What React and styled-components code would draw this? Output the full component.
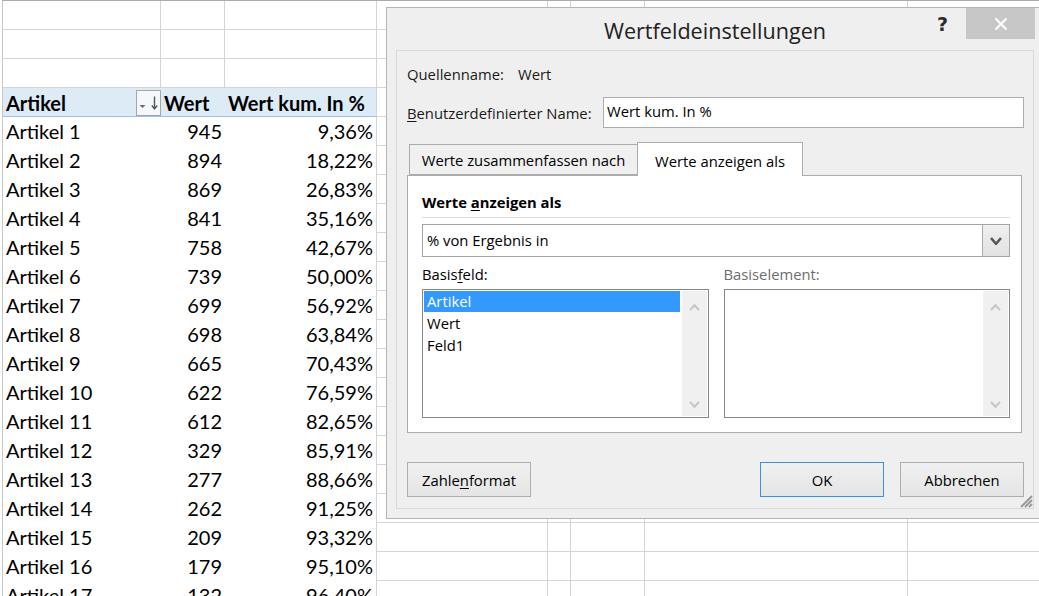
import React from "react";
import styled, { createGlobalStyle } from "styled-components";

const GlobalStyle = createGlobalStyle`
  html, body {
    margin: 0;
    padding: 0;
    background: #fff;
    overflow: hidden;
  }
  #root {
    position: relative;
    width: 1039px;
    height: 596px;
    overflow: hidden;
  }
`;

const rows = [
  ["Artikel 1", 945, "9,36%"],
  ["Artikel 2", 894, "18,22%"],
  ["Artikel 3", 869, "26,83%"],
  ["Artikel 4", 841, "35,16%"],
  ["Artikel 5", 758, "42,67%"],
  ["Artikel 6", 739, "50,00%"],
  ["Artikel 7", 699, "56,92%"],
  ["Artikel 8", 698, "63,84%"],
  ["Artikel 9", 665, "70,43%"],
  ["Artikel 10", 622, "76,59%"],
  ["Artikel 11", 612, "82,65%"],
  ["Artikel 12", 329, "85,91%"],
  ["Artikel 13", 277, "88,66%"],
  ["Artikel 14", 262, "91,25%"],
  ["Artikel 15", 209, "93,32%"],
  ["Artikel 16", 179, "95,10%"],
  ["Artikel 17", 132, "96,40%"],
];

const EXTRA_COLS = 5;

/* ---------- spreadsheet ---------- */

const Sheet = styled.div`
  margin-left: 2px;
  border-top: 1px solid #ababab;
  border-left: 1px solid #c8c8c8;
  font-family: Lato, "Open Sans", sans-serif;
  font-size: 20px;
  color: #000;
`;

const Row = styled.div`
  display: grid;
  grid-template-columns: 158px 64px 152px 171px 23px 74px 263px 200px;
  height: 29px;
`;

const Cell = styled.div`
  box-sizing: border-box;
  height: 29px;
  border-right: 1px solid #d4d4d4;
  border-bottom: 1px solid #d4d4d4;
`;

const PivotCell = styled.div`
  box-sizing: border-box;
  height: 29px;
  display: flex;
  align-items: flex-end;
  justify-content: ${(p) => (p.$right ? "flex-end" : "flex-start")};
  padding: 0 3px ${(p) => (p.$head ? 1 : 3)}px;
  line-height: 24px;
  white-space: nowrap;
  position: relative;
  font-weight: ${(p) => (p.$head ? 700 : 400)};
  background: ${(p) => (p.$head ? "#ddebf7" : "#fff")};
  border-bottom: ${(p) => (p.$head ? "1px solid #9bc2e6" : "none")};
  border-right: ${(p) => (p.$last ? "1px solid #d4d4d4" : "none")};
`;

const FilterButton = styled.div`
  position: absolute;
  right: 0;
  top: 2px;
  width: 25px;
  height: 26px;
  box-sizing: border-box;
  border: 1px solid #a6a6a6;
  background: #f4f7fb;
  display: flex;
  align-items: center;
  justify-content: center;
`;

const SortIcon = () => (
  <svg width="23" height="24" viewBox="0 0 23 24">
    <path d="M2.5 14 L8.5 14 L5.5 17 Z" fill="#6b6b6b" />
    <path d="M17.5 5.5 V17.5" stroke="#555" strokeWidth="1.4" />
    <path d="M14.8 14.5 L17.5 17.8 L20.2 14.5" stroke="#555" strokeWidth="1.4" fill="none" />
  </svg>
);

const EmptyCells = ({ from }) =>
  Array.from({ length: 8 - from }, (_, i) => <Cell key={i} />);

const Spreadsheet = () => (
  <Sheet>
    {[0, 1, 2].map((r) => (
      <Row key={r}>
        <EmptyCells from={0} />
      </Row>
    ))}
    <Row>
      <PivotCell $head>
        Artikel
        <FilterButton>
          <SortIcon />
        </FilterButton>
      </PivotCell>
      <PivotCell $head>Wert</PivotCell>
      <PivotCell $head $last>
        Wert kum. In %
      </PivotCell>
      <EmptyCells from={8 - EXTRA_COLS} />
    </Row>
    {rows.map(([name, value, pct]) => (
      <Row key={name}>
        <PivotCell>{name}</PivotCell>
        <PivotCell $right>{value}</PivotCell>
        <PivotCell $right $last>
          {pct}
        </PivotCell>
        <EmptyCells from={8 - EXTRA_COLS} />
      </Row>
    ))}
  </Sheet>
);

/* ---------- dialog ---------- */

const Dialog = styled.div`
  position: absolute;
  left: 386px;
  top: 7px;
  width: 658px;
  height: 512px;
  box-sizing: border-box;
  background: #efefef;
  border: 1px solid #b4b4b4;
  padding: 0 9px 9px;
  display: flex;
  flex-direction: column;
  font-family: "Open Sans", "Noto Sans", sans-serif;
  font-size: 14.8px;
  color: #1a1a1a;
`;

const TitleBar = styled.div`
  height: 42px;
  display: grid;
  grid-template-columns: 1fr auto 1fr;
  align-items: start;
`;

const Title = styled.div`
  grid-column: 2;
  padding-top: 9px;
  font-size: 21.6px;
  line-height: 28px;
  color: #222;
`;

const Controls = styled.div`
  grid-column: 3;
  justify-self: end;
  display: flex;
  align-items: flex-start;
  margin-right: -1px;
`;

const Help = styled.div`
  font-family: "DejaVu Sans", sans-serif;
  font-weight: 700;
  font-size: 19px;
  line-height: 22px;
  color: #2b2b2b;
  margin: 5px 18px 0 0;
`;

const CloseButton = styled.div`
  width: 69px;
  height: 31px;
  background: #c7c7c7;
  display: flex;
  align-items: center;
  justify-content: center;
`;

const Panel = styled.div`
  position: relative;
  flex: 1;
  border: 1px solid #d9d9d9;
  padding: 13px 9px 11px 10px;
  display: flex;
  flex-direction: column;
`;

const InfoRow = styled.div`
  display: flex;
  align-items: center;
  gap: ${(p) => p.$gap || 0}px;
  line-height: 20px;
  margin-bottom: ${(p) => p.$mb || 0}px;
`;

const Label = styled.span`
  flex: none;
  width: ${(p) => p.$w}px;
`;

const Key = styled.u`
  text-decoration-thickness: 1px;
  text-underline-offset: 2px;
`;

const TextInput = styled.div`
  flex: 1;
  height: 31px;
  box-sizing: border-box;
  border: 1px solid #abadb3;
  background: #fff;
  padding: 0 3px;
  line-height: 27px;
  color: #000;
`;

const TabStrip = styled.div`
  display: flex;
  align-items: flex-end;
  margin: 14px 0 0 2px;
  position: relative;
  z-index: 1;
`;

const Tab = styled.div`
  box-sizing: border-box;
  width: ${(p) => p.$w}px;
  height: ${(p) => (p.$active ? 34 : 31)}px;
  margin-left: ${(p) => (p.$active ? -1 : 0)}px;
  margin-bottom: ${(p) => (p.$active ? -1 : 0)}px;
  border: 1px solid #acacac;
  border-bottom: ${(p) => (p.$active ? "none" : "1px solid #acacac")};
  background: ${(p) => (p.$active ? "#fff" : "#f0f0f0")};
  display: flex;
  align-items: center;
  justify-content: center;
  padding-top: ${(p) => (p.$active ? 2 : 0)}px;
  color: #000;
`;

const TabPanel = styled.div`
  height: 258px;
  box-sizing: border-box;
  margin-right: 2px;
  border: 1px solid #acacac;
  background: #fff;
  padding: 16px 11px 14px 14px;
  display: flex;
  flex-direction: column;
`;

const Heading = styled.div`
  font-weight: 700;
  line-height: 20px;
  color: #000;
`;

const Separator = styled.div`
  height: 1px;
  background: #dcdcdc;
  margin-top: 5px;
`;

const Select = styled.div`
  margin-top: 6px;
  height: 33px;
  box-sizing: border-box;
  border: 1px solid #a3a3a3;
  display: flex;
  color: #000;
`;

const SelectText = styled.div`
  flex: 1;
  padding-left: 4px;
  line-height: 31px;
`;

const SelectButton = styled.div`
  width: 26px;
  border-left: 1px solid #acacac;
  background: linear-gradient(#f0f0f0, #e2e2e2);
  display: flex;
  align-items: center;
  justify-content: center;
`;

const Fields = styled.div`
  margin-top: 7px;
  display: grid;
  grid-template-columns: 1fr 1fr;
  column-gap: 15px;
`;

const FieldLabel = styled.div`
  line-height: 20px;
  color: ${(p) => (p.$disabled ? "#6d6d6d" : "#000")};
  margin-bottom: 5px;
`;

const ListBox = styled.div`
  height: 129px;
  box-sizing: border-box;
  border: 1px solid #828790;
  background: #fff;
  display: flex;
`;

const Items = styled.div`
  flex: 1;
  padding: 1px;
`;

const Item = styled.div`
  height: 21px;
  line-height: 21px;
  padding-left: 3px;
  margin-bottom: 1px;
  color: ${(p) => (p.$selected ? "#fff" : "#000")};
  background: ${(p) => (p.$selected ? "#3399ff" : "transparent")};
`;

const ScrollBar = styled.div`
  width: 25px;
  margin: 1px;
  background: #f0f0f0;
  display: flex;
  flex-direction: column;
  justify-content: space-between;
  align-items: center;
  padding: 13px 0 8px;
`;

const ButtonRow = styled.div`
  margin-top: 29px;
  display: flex;
  gap: 16px;
`;

const Button = styled.div`
  width: 124px;
  height: 35px;
  box-sizing: border-box;
  border: 1px solid ${(p) => (p.$default ? "#3c8fe6" : "#adadad")};
  background: linear-gradient(#f0f0f0, #e5e5e5);
  display: flex;
  align-items: center;
  justify-content: center;
  color: #000;
  margin-left: ${(p) => (p.$push ? "auto" : "0")};
`;

const Grip = styled.svg`
  position: absolute;
  right: 0;
  bottom: 0;
`;

const Chevron = ({ up, color, w = 11, h = 7, sw = 2 }) => (
  <svg width={w} height={h} viewBox={`0 0 ${w} ${h}`}>
    <polyline
      points={
        up
          ? `1,${h - 1} ${w / 2},1.2 ${w - 1},${h - 1}`
          : `1,1 ${w / 2},${h - 1.2} ${w - 1},1`
      }
      fill="none"
      stroke={color}
      strokeWidth={sw}
    />
  </svg>
);

const Scroll = () => (
  <ScrollBar>
    <Chevron up color="#c6c6c6" />
    <Chevron color="#c6c6c6" />
  </ScrollBar>
);

const SettingsDialog = () => (
  <Dialog>
    <TitleBar>
      <Title>Wertfeldeinstellungen</Title>
      <Controls>
        <Help>?</Help>
        <CloseButton>
          <svg width="14" height="14" viewBox="0 0 14 14">
            <path d="M1.5 1.5 L12.5 12.5 M12.5 1.5 L1.5 12.5" stroke="#fff" strokeWidth="2" />
          </svg>
        </CloseButton>
      </Controls>
    </TitleBar>
    <Panel>
      <InfoRow $mb={13}>
        <Label $w={111}>Quellenname:</Label>
        <span>Wert</span>
      </InfoRow>
      <InfoRow>
        <Label $w={196}>
          <Key>B</Key>enutzerdefinierter Name:
        </Label>
        <TextInput>Wert kum. In %</TextInput>
      </InfoRow>
      <TabStrip>
        <Tab $w={229}>Werte zusammenfassen nach</Tab>
        <Tab $w={166} $active>
          Werte anzeigen als
        </Tab>
      </TabStrip>
      <TabPanel>
        <Heading>
          Werte <Key>a</Key>nzeigen als
        </Heading>
        <Separator />
        <Select>
          <SelectText>% von Ergebnis in</SelectText>
          <SelectButton>
            <Chevron color="#575757" w={12} h={8} sw={2.6} />
          </SelectButton>
        </Select>
        <Fields>
          <div>
            <FieldLabel>
              Basis<Key>f</Key>eld:
            </FieldLabel>
            <ListBox>
              <Items>
                <Item $selected>Artikel</Item>
                <Item>Wert</Item>
                <Item>Feld1</Item>
              </Items>
              <Scroll />
            </ListBox>
          </div>
          <div>
            <FieldLabel $disabled>Basiselement:</FieldLabel>
            <ListBox>
              <Items />
              <Scroll />
            </ListBox>
          </div>
        </Fields>
      </TabPanel>
      <ButtonRow>
        <Button>
          Zahle<Key>n</Key>format
        </Button>
        <Button $default $push>
          OK
        </Button>
        <Button>Abbrechen</Button>
      </ButtonRow>
      <Grip width="14" height="14" viewBox="0 0 14 14">
        <path d="M14 0 L14 14 L0 14 Z" fill="#efefef" />
        <path d="M13 2 L2 13 M13 6 L6 13 M13 10 L10 13" stroke="#9a9a9a" strokeWidth="2" />
      </Grip>
    </Panel>
  </Dialog>
);

export default function App() {
  return (
    <>
      <GlobalStyle />
      <Spreadsheet />
      <SettingsDialog />
    </>
  );
}
